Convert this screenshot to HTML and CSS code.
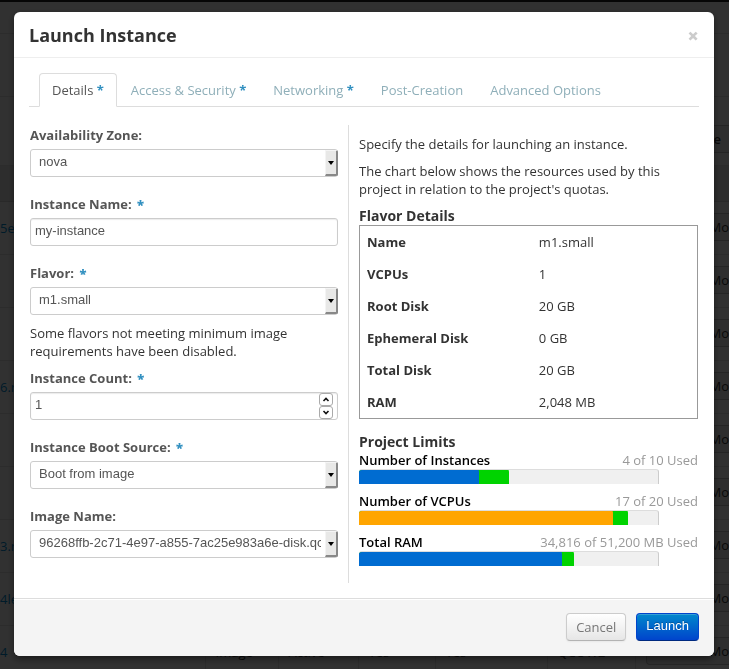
FILE: index.html
```
<!DOCTYPE html>
<html lang="en">
<head>
    <meta charset="UTF-8">
    <meta name="viewport" content="width=device-width, initial-scale=1.0">
    <title>Launch Instance</title>
    <link rel="stylesheet" href="styles.css">
</head>
<body>
    <!-- Images page behind the modal -->
    <div class="page" aria-hidden="true">
        <div class="topbar"></div>
        <div class="page-head"></div>
        <div class="page-title"></div>
        <div class="table-actions"><button class="page-btn" tabindex="-1">ge</button></div>
        <table class="images">
            <thead>
                <tr><th class="col-name"></th><th class="col-type"></th><th class="col-status"></th><th class="col-public"></th><th class="col-protected"></th><th class="col-format"></th><th></th></tr>
            </thead>
            <tbody>
                <tr><td><a href="#">5e-</a></td><td></td><td></td><td></td><td></td><td></td><td><button class="page-btn split" tabindex="-1">Mo</button></td></tr>
                <tr><td></td><td></td><td></td><td></td><td></td><td></td><td><button class="page-btn split" tabindex="-1">Mo</button></td></tr>
                <tr><td></td><td></td><td></td><td></td><td></td><td></td><td><button class="page-btn split" tabindex="-1">Mo</button></td></tr>
                <tr><td><a href="#">6.r</a></td><td></td><td></td><td></td><td></td><td></td><td><button class="page-btn split" tabindex="-1">Mo</button></td></tr>
                <tr><td></td><td></td><td></td><td></td><td></td><td></td><td><button class="page-btn split" tabindex="-1">Mo</button></td></tr>
                <tr><td></td><td></td><td></td><td></td><td></td><td></td><td><button class="page-btn split" tabindex="-1">Mo</button></td></tr>
                <tr><td><a href="#">3.r</a></td><td></td><td></td><td></td><td></td><td></td><td><button class="page-btn split" tabindex="-1">Mo</button></td></tr>
                <tr><td><a href="#">4le</a></td><td></td><td></td><td></td><td></td><td></td><td><button class="page-btn split" tabindex="-1">Mo</button></td></tr>
                <tr><td><a href="#">4</a></td><td>Image</td><td>Active</td><td>Yes</td><td>Yes</td><td>QCOW2</td><td><button class="page-btn split" tabindex="-1">Mo</button></td></tr>
            </tbody>
        </table>
    </div>

    <div class="backdrop">
        <form class="modal" role="dialog" aria-labelledby="modal-title">
            <div class="modal-header">
                <h3 id="modal-title">Launch Instance</h3>
                <button type="button" class="close" aria-label="Close">&times;</button>
            </div>

            <div class="modal-body">
                <ul class="tabs">
                    <li class="active"><a href="#">Details <b>*</b></a></li>
                    <li><a href="#">Access &amp; Security <b>*</b></a></li>
                    <li><a href="#">Networking <b>*</b></a></li>
                    <li><a href="#">Post-Creation</a></li>
                    <li><a href="#">Advanced Options</a></li>
                </ul>

                <div class="columns">
                    <div class="left">
                        <div class="field">
                            <label for="zone">Availability Zone:</label>
                            <div class="select">
                                <select id="zone"><option>nova</option></select>
                            </div>
                        </div>
                        <div class="field">
                            <label for="name">Instance Name: <b>*</b></label>
                            <input type="text" id="name" value="my-instance">
                        </div>
                        <div class="field with-help">
                            <label for="flavor">Flavor: <b>*</b></label>
                            <div class="select">
                                <select id="flavor"><option>m1.small</option></select>
                            </div>
                            <p class="help">Some flavors not meeting minimum image requirements have been disabled.</p>
                        </div>
                        <div class="field">
                            <label for="count">Instance Count: <b>*</b></label>
                            <div class="number">
                                <input type="number" id="count" value="1" min="1">
                                <div class="spinner">
                                    <button type="button" aria-label="Increase"><svg width="8" height="5" viewBox="0 0 8 5"><path d="M1.5 4 L4 1.5 L6.5 4"/></svg></button>
                                    <button type="button" aria-label="Decrease"><svg width="8" height="5" viewBox="0 0 8 5"><path d="M1.5 1 L4 3.5 L6.5 1"/></svg></button>
                                </div>
                            </div>
                        </div>
                        <div class="field">
                            <label for="source">Instance Boot Source: <b>*</b></label>
                            <div class="select">
                                <select id="source"><option>Boot from image</option></select>
                            </div>
                        </div>
                        <div class="field">
                            <label for="image">Image Name:</label>
                            <div class="select">
                                <select id="image"><option>96268ffb-2c71-4e97-a855-7ac25e983a6e-disk.qcow2</option></select>
                            </div>
                        </div>
                    </div>

                    <div class="right">
                        <p>Specify the details for launching an instance.</p>
                        <p>The chart below shows the resources used by this project in relation to the project's quotas.</p>

                        <h4>Flavor Details</h4>
                        <table class="flavor">
                            <tr><th>Name</th><td>m1.small</td></tr>
                            <tr><th>VCPUs</th><td>1</td></tr>
                            <tr><th>Root Disk</th><td>20 GB</td></tr>
                            <tr><th>Ephemeral Disk</th><td>0 GB</td></tr>
                            <tr><th>Total Disk</th><td>20 GB</td></tr>
                            <tr><th>RAM</th><td>2,048 MB</td></tr>
                        </table>

                        <h4>Project Limits</h4>
                        <div class="quota">
                            <div class="quota-title"><strong>Number of Instances</strong><span>4 of 10 Used</span></div>
                            <div class="bar">
                                <div class="added" style="width: 50%"></div>
                                <div class="used" style="width: 40%"></div>
                            </div>
                        </div>
                        <div class="quota">
                            <div class="quota-title"><strong>Number of VCPUs</strong><span>17 of 20 Used</span></div>
                            <div class="bar">
                                <div class="added" style="width: 90%"></div>
                                <div class="used warning" style="width: 85%"></div>
                            </div>
                        </div>
                        <div class="quota">
                            <div class="quota-title"><strong>Total RAM</strong><span>34,816 of 51,200 MB Used</span></div>
                            <div class="bar">
                                <div class="added" style="width: 72%"></div>
                                <div class="used" style="width: 68%"></div>
                            </div>
                        </div>
                    </div>
                </div>
            </div>

            <div class="modal-footer">
                <button type="button" class="btn cancel">Cancel</button>
                <button type="submit" class="btn launch">Launch</button>
            </div>
        </form>
    </div>
</body>
</html>
```

FILE: styles.css
```
*,
*::before,
*::after {
    margin: 0;
    padding: 0;
    box-sizing: border-box;
}

body {
    font-family: "Open Sans", sans-serif;
    font-size: 13px;
    line-height: 18px;
    color: #333;
    background-color: #fff;
}

a {
    text-decoration: none;
}

/* Page behind the modal */
.page {
    position: fixed;
    inset: 0;
    overflow: hidden;
    background: #f5f5f5;
}

.topbar {
    height: 2px;
    background: #222;
}

.page-head {
    height: 32px;
    border-bottom: 1px solid #ddd;
}

.page-title {
    height: 63px;
    border-bottom: 1px solid #ddd;
}

.table-actions {
    display: flex;
    justify-content: flex-end;
    padding: 28px 0 12px;
    border-bottom: 1px solid #ddd;
}

.page-btn {
    height: 28px;
    padding: 0 8px 0 0;
    font: 13px "Open Sans", sans-serif;
    color: #333;
    text-align: right;
    background: #e6e6e6;
    border: 1px solid #bbb;
    border-right: 0;
    border-radius: 4px 0 0 4px;
}

.table-actions .page-btn {
    width: 80px;
    font-weight: 600;
}

.page-btn.split {
    display: block;
    width: 100%;
    padding: 0;
    margin-top: 11px;
}

.images {
    width: 100%;
    table-layout: fixed;
    border-collapse: collapse;
}

.images th {
    height: 35px;
    background: #e2e2e2;
    border-bottom: 1px solid #ccc;
}

.images td {
    height: 53px;
    padding-left: 10px;
    border-bottom: 1px solid #ddd;
    border-left: 1px solid #ddd;
}

.images td:first-child {
    padding-left: 0;
    border-left: 0;
}

.images td:last-child {
    vertical-align: top;
}

.images a {
    color: #0088cc;
}

.col-name { width: 205px; }
.col-type { width: 73px; }
.col-status { width: 80px; }
.col-public { width: 77px; }
.col-protected { width: 112px; }
.col-format { width: 88px; }

/* Modal */
.backdrop {
    position: absolute;
    top: 0;
    left: 0;
    width: 100%;
    min-height: 100vh;
    padding: 12px 15px 12px 14px;
    background: rgba(0, 0, 0, 0.8);
}

.modal {
    max-width: 760px;
    margin: 0 auto;
    background: #fff;
    border-radius: 6px;
    box-shadow: 0 3px 7px rgba(0, 0, 0, 0.5);
}

.modal-header {
    display: flex;
    justify-content: space-between;
    padding: 10px 15px 8px;
    border-bottom: 1px solid #eee;
}

.modal-header h3 {
    font-size: 18px;
    line-height: 27px;
}

.close {
    width: 12px;
    font: 800 20px/27px "Open Sans", sans-serif;
    color: #ccc;
    background: none;
    border: 0;
    cursor: pointer;
}

.modal-body {
    padding: 15px;
}

.tabs {
    display: flex;
    padding-left: 10px;
    margin-bottom: 18px;
    list-style: none;
    border-bottom: 1px solid #ddd;
}

.tabs li {
    margin: 0 1px -1px 0;
}

.tabs a {
    display: block;
    padding: 7px 12px;
    color: #8fafb9;
    border: 1px solid transparent;
    border-radius: 4px 4px 0 0;
}

.tabs .active a {
    color: #555;
    background: #fff;
    border-color: #ddd #ddd #fff;
}

.tabs b,
label b {
    color: #3290c0;
}

.columns {
    display: grid;
    grid-template-columns: minmax(0, 32fr) minmax(0, 35fr);
}

.left {
    padding: 1px 10px 7px 1px;
    border-right: 1px solid #ddd;
}

.right {
    padding: 10px 1px 0 10px;
}

/* Form fields */
.field {
    margin-bottom: 18px;
}

.field.with-help {
    margin-bottom: 9px;
}

label {
    display: block;
    margin-bottom: 5px;
    font-weight: bold;
    color: #555;
}

label b {
    margin-left: 2px;
}

.help {
    margin-top: 9px;
}

input,
select {
    display: block;
    width: 100%;
    height: 28px;
    padding: 0 4px 4px;
    font: 13px "Liberation Sans", Arial, sans-serif;
    color: #555;
    background: #fff;
    border: 1px solid #ccc;
    border-radius: 3px;
    appearance: none;
}

input {
    box-shadow: inset 0 1px 1px rgba(0, 0, 0, 0.08);
}

input[type="number"] {
    appearance: textfield;
}

select {
    padding: 0 16px 4px 8px;
}

.select,
.number {
    position: relative;
}

/* raised arrow box at the right end of a select */
.select::before {
    content: "";
    position: absolute;
    top: 1px;
    right: 0;
    bottom: 1px;
    width: 13px;
    background: #e8e8e7;
    border: solid #888;
    border-width: 0 2px 2px 0;
    border-left: 1px solid #f4f4f4;
    border-top: 1px solid #f4f4f4;
    border-radius: 0 2px 2px 0;
    pointer-events: none;
}

.select::after {
    content: "";
    position: absolute;
    top: 12px;
    right: 4px;
    border: 3px solid transparent;
    border-top: 4px solid #000;
    border-bottom: 0;
    pointer-events: none;
}

.spinner {
    position: absolute;
    top: 1px;
    right: 5px;
    display: flex;
    flex-direction: column;
}

.spinner button {
    display: flex;
    align-items: center;
    justify-content: center;
    width: 14px;
    height: 13px;
    background: #fff;
    border: 1px solid #aaa;
    border-radius: 3px;
}

.spinner path {
    fill: none;
    stroke: #111;
    stroke-width: 1.6;
}

/* Right column */
.right p {
    margin-bottom: 9px;
}

h4 {
    font-size: 14px;
    line-height: 18px;
}

.flavor {
    width: 100%;
    margin-bottom: 14px;
    border: 1px solid #999;
    border-spacing: 0;
}

.flavor th,
.flavor td {
    height: 32px;
    padding: 0 7px;
    text-align: left;
}

.flavor th {
    width: 51%;
}

.quota {
    margin-bottom: 8px;
}

.quota:last-child {
    margin-bottom: 0;
}

.quota-title {
    display: flex;
    justify-content: space-between;
}

.quota-title strong {
    font-weight: 600;
    color: #000;
}

.quota-title span {
    color: #999;
}

.bar {
    position: relative;
    max-width: 300px;
    height: 15px;
    overflow: hidden;
    background: #f0f0f0;
    border: 1px solid #ccc;
    border-width: 1px 1px 0 0;
    border-top-color: #ddd;
    border-radius: 3px 3px 0 0;
}

/* the used part lies over the part that this launch adds */
.added,
.used {
    position: absolute;
    top: -1px;
    left: 0;
    height: 15px;
    border-radius: 3px 3px 0 0;
}

.added {
    background: #00d300;
}

.used {
    background: #006cd1;
}

.used.warning {
    background: #ffa500;
}

/* Footer */
.modal-footer {
    display: flex;
    justify-content: flex-end;
    gap: 10px;
    padding: 14px 15px 15px;
    background: #f4f4f4;
    border-top: 1px solid #ddd;
    border-radius: 0 0 6px 6px;
    box-shadow: inset 0 1px 0 #fff;
}

.btn {
    height: 28px;
    padding: 0 9px;
    font: 13px "Open Sans", sans-serif;
    border: 1px solid #ccc;
    border-radius: 4px;
    cursor: pointer;
}

.cancel {
    color: #777;
    background: linear-gradient(#fff, #e6e6e6);
    border-bottom-color: #b3b3b3;
    box-shadow: 0 1px 2px rgba(0, 0, 0, 0.05);
}

.launch {
    padding-bottom: 4px;
    font-family: "Liberation Sans", Arial, sans-serif;
    color: #fff;
    background: linear-gradient(#0088cc, #0044cc);
    border-color: #0044cc #0044cc #002a80;
    box-shadow: inset 0 1px 0 rgba(255, 255, 255, 0.2);
    text-shadow: 0 -1px 0 rgba(0, 0, 0, 0.25);
}
```
